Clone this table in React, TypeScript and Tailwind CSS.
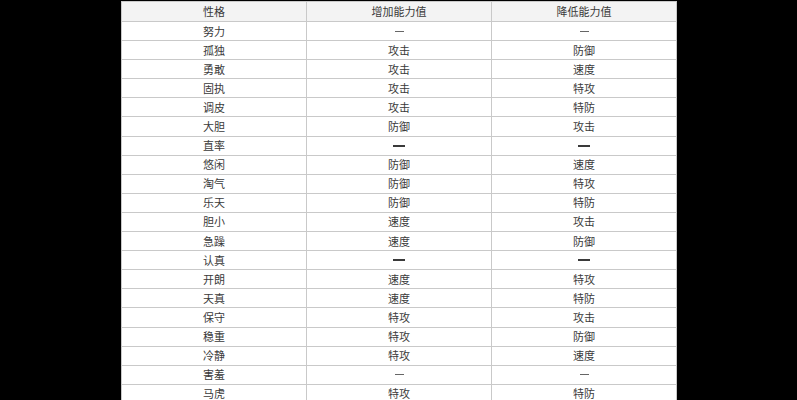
import React from "react";

type Row = [string, string, string, number?];

const rows: Row[] = [
  ["努力", "—", "—", 1],
  ["孤独", "攻击", "防御"],
  ["勇敢", "攻击", "速度"],
  ["固执", "攻击", "特攻"],
  ["调皮", "攻击", "特防"],
  ["大胆", "防御", "攻击"],
  ["直率", "—", "—", 2],
  ["悠闲", "防御", "速度"],
  ["淘气", "防御", "特攻"],
  ["乐天", "防御", "特防"],
  ["胆小", "速度", "攻击"],
  ["急躁", "速度", "防御"],
  ["认真", "—", "—", 2],
  ["开朗", "速度", "特攻"],
  ["天真", "速度", "特防"],
  ["保守", "特攻", "攻击"],
  ["稳重", "特攻", "防御"],
  ["冷静", "特攻", "速度"],
  ["害羞", "—", "—", 1],
  ["马虎", "特攻", "特防"],
];

function Dash({ kind }: { kind: number }) {
  if (kind === 1) {
    return <span className="block w-[9px] h-px bg-[#666]" />;
  }
  return <span className="block w-[12px] h-[2px] bg-[#3a3a3a]" />;
}

function Cell({ children, head }: { children: React.ReactNode; head?: boolean }) {
  return (
    <div
      className={`box-border border-r border-b border-[#c9c9c9] flex items-center justify-center text-[11px] leading-none text-[#3a3a3a] ${
        head ? "h-[20px] bg-[#f3f3f3]" : "h-[19.1px] bg-white"
      }`}
    >
      {children}
    </div>
  );
}

export default function App() {
  return (
    <div
      className="w-[797px] h-[400px] bg-black overflow-hidden"
      style={{ fontFamily: '"Noto Sans CJK SC", "Noto Sans", sans-serif' }}
    >
      <div className="ml-[121px] mt-px w-[556px] border-t border-l border-[#c9c9c9] grid grid-cols-[185px_185px_185px]">
        <Cell head>性格</Cell>
        <Cell head>增加能力值</Cell>
        <Cell head>降低能力值</Cell>
        {rows.map(([a, b, c, d]) => (
          <React.Fragment key={a}>
            <Cell>{a}</Cell>
            <Cell>{d ? <Dash kind={d} /> : b}</Cell>
            <Cell>{d ? <Dash kind={d} /> : c}</Cell>
          </React.Fragment>
        ))}
      </div>
    </div>
  );
}
